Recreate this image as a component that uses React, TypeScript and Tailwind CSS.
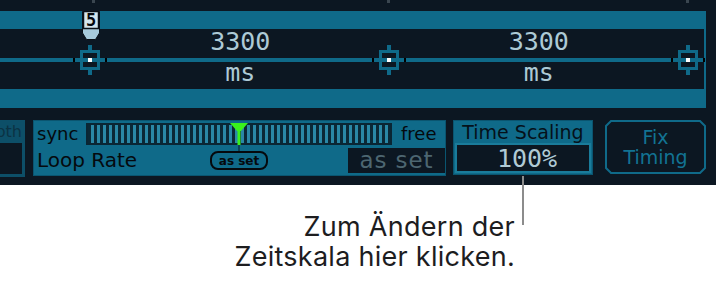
import React from 'react';

const markers = [72, 371, 670];

function Marker({ left }: { left: number }) {
  return (
    <svg
      className="absolute top-[15px]"
      style={{ left }}
      width="36"
      height="32"
      viewBox="0 0 36 32"
    >
      <rect x="1" y="14" width="2" height="4" fill="#000" />
      <rect x="33" y="14" width="2" height="4" fill="#000" />
      <rect x="9.5" y="7.5" width="17" height="17" fill="none" stroke="#0f6a89" strokeWidth="3" />
      <rect x="16" y="1" width="4" height="6" fill="#0f6a89" />
      <rect x="16" y="25" width="4" height="6" fill="#0f6a89" />
      <rect x="16" y="14" width="4" height="4" fill="#fff" />
    </svg>
  );
}

function Flag() {
  return (
    <div className="absolute left-[82px] top-[11px] h-[29px] w-[18px]">
      <svg className="absolute inset-0" width="18" height="29" viewBox="0 0 18 29">
        <polygon points="0.5,0.5 17.5,0.5 17.5,22 13.5,28.5 4.5,28.5 0.5,22" fill="#a7cbdc" stroke="#0a1118" />
        <rect x="1.5" y="0.5" width="15" height="17" fill="#d3e6ee" stroke="#0a1118" strokeWidth="1.5" />
      </svg>
      <span className="absolute left-0 top-[0px] w-[18px] text-center font-['DejaVu_Sans_Mono',monospace] text-[17px] font-bold leading-[18px] text-[#05080c]">
        5
      </span>
    </div>
  );
}

function Timeline() {
  return (
    <div className="flex h-[97px] w-[706px] flex-col bg-[#0f6a89]">
      <div className="h-[18px]" />
      <div className="relative mr-[2px] flex h-[60px] bg-[#0c1722]">
        <div className="absolute left-0 right-0 top-[29px] h-[4px] bg-[#0f6a89]" />
        {markers.map((m) => (
          <Marker key={m} left={m} />
        ))}
        <div className="w-[91px]" />
        {[0, 1].map((i) => (
          <div
            key={i}
            className="relative flex flex-1 flex-col items-center gap-[5px] font-['DejaVu_Sans_Mono',monospace] text-[25px] leading-[26px] text-[#adcad6]"
          >
            <span>3300</span>
            <span>ms</span>
          </div>
        ))}
        <div className="w-[16px]" />
      </div>
    </div>
  );
}

function LoopRate() {
  return (
    <div className="ml-[8px] flex h-[56px] w-[413px] flex-col border border-[#0a5570] bg-[#0f6a89] pl-[3px] pt-[2px] font-['DejaVu_Sans',sans-serif] text-[#05090d]">
      <div className="flex h-[22px] items-center">
        <span className="w-[49px] text-[18px] leading-[22px]">sync</span>
        <div className="relative h-[22px] w-[306px] border-2 border-[#0a2634] bg-[image:repeating-linear-gradient(90deg,#0b2836_0px,#0b2836_3px,#2a88a6_3px,#2a88a6_6px)]">
          <svg className="absolute left-[142px] top-[-2px]" width="18" height="28" viewBox="0 0 18 28">
            <polygon points="0,0 18,0 11,8 7,8" fill="#39f21c" />
            <rect x="7.5" y="7" width="3" height="15" fill="#39f21c" />
            <rect x="8.5" y="22" width="1" height="6" fill="#0b1a22" />
          </svg>
        </div>
        <span className="ml-[9px] text-[18px] leading-[22px]">free</span>
      </div>
      <div className="mt-[3px] flex h-[25px] items-start">
        <span className="w-[173px] text-[20px] leading-[25px]">Loop Rate</span>
        <span className="mt-[3px] flex h-[19px] w-[58px] items-center justify-center rounded-[8px] border-2 border-[#05090d] text-[12px] font-bold leading-none">
          as set
        </span>
        <div className="flex-1" />
        <div className="flex h-[25px] w-[97px] items-center justify-center bg-[#0c1722] text-[23px] leading-none tracking-[0.04em] text-[#4d6671]">
          as set
        </div>
      </div>
    </div>
  );
}

function TimeScaling() {
  return (
    <div className="ml-[7px] flex h-[55px] w-[140px] flex-col border border-[#0a5570] bg-[#0f6a89] px-[1px] pb-[1px] font-['DejaVu_Sans',sans-serif]">
      <div className="flex h-[22px] items-center justify-center text-[19px] leading-none text-[#05111a]">
        Time Scaling
      </div>
      <div className="flex flex-1 items-center justify-center border-2 border-[#1a7c9b] bg-[#0c1722] pl-[8px] font-['DejaVu_Sans_Mono',monospace] text-[25px] leading-none text-[#b0cad5]">
        100%
      </div>
    </div>
  );
}

function FixTiming() {
  return (
    <div className="relative ml-[12px] flex h-[54px] w-[101px] flex-col items-center justify-center font-['DejaVu_Sans',sans-serif] text-[19px] leading-[20px] text-[#127393]">
      <svg className="absolute inset-0" width="101" height="54" viewBox="0 0 101 54">
        <polygon
          points="6,1 95,1 100,6 100,48 95,53 6,53 1,48 1,6"
          fill="none"
          stroke="#0f6a89"
          strokeWidth="2"
        />
      </svg>
      <span>Fix</span>
      <span>Timing</span>
    </div>
  );
}

function DepthStub() {
  return (
    <div className="flex h-[57px] w-[25px] flex-col bg-[#0d4f68] pb-[3px] pr-[3px]">
      <div className="flex h-[23px] items-center justify-end overflow-hidden font-['DejaVu_Sans',sans-serif] text-[16px] leading-none text-[#0b3344]">
        pth
      </div>
      <div className="flex-1 bg-[#0c1722]" />
    </div>
  );
}

export default function App() {
  return (
    <div className="relative h-[285px] w-[716px] overflow-hidden bg-white">
      <div className="flex h-[185px] flex-col bg-[#0c1722]">
        <div className="relative h-[11px]">
          <span className="absolute left-[92px] top-0 h-[3px] w-[3px] bg-[#3a4650]" />
          <span className="absolute left-[387px] top-0 h-[3px] w-[3px] bg-[#3a4650]" />
          <span className="absolute left-[686px] top-0 h-[3px] w-[3px] bg-[#3a4650]" />
        </div>
        <Timeline />
        <div className="mt-[12px] flex items-start">
          <DepthStub />
          <LoopRate />
          <TimeScaling />
          <FixTiming />
        </div>
      </div>
      <Flag />
      <div className="absolute left-[522px] top-[176px] h-[49px] w-[2px] bg-[#8c8c8c]" />
      <div className="w-[515px] pt-[27px] text-right font-['Inter',sans-serif] text-[27px] leading-[30px] tracking-[0.01em] text-[#1d1d1f]">
        <p>Zum Ändern der</p>
        <p>Zeitskala hier klicken.</p>
      </div>
    </div>
  );
}
